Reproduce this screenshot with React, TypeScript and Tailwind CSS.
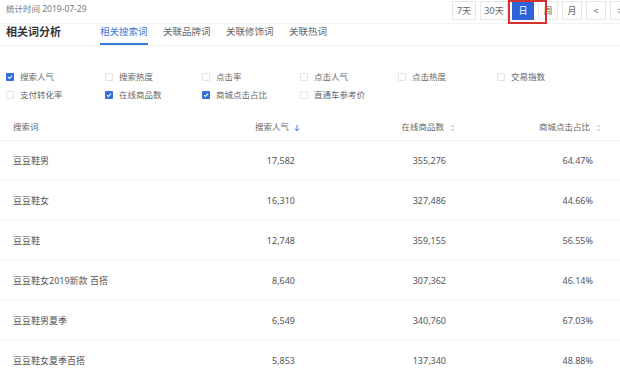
import React from "react";

const font = { fontFamily: '"Noto Sans", "Noto Sans CJK SC", sans-serif' };

function Check({ on }: { on: boolean }) {
  return on ? (
    <span className="flex h-[8px] w-[8px] items-center justify-center rounded-[1px] bg-[#2f6fe0]">
      <svg width="6" height="6" viewBox="0 0 6 6">
        <path d="M1 3.1 L2.4 4.5 L5 1.6" fill="none" stroke="#fff" strokeWidth="1.1" />
      </svg>
    </span>
  ) : (
    <span className="h-[8px] w-[8px] rounded-[1px] border border-[#e3e3e3] bg-white" />
  );
}

function SortBoth() {
  return (
    <svg width="5" height="8" viewBox="0 0 5 8" className="ml-[6px]">
      <path d="M2.5 0.5 L4.5 3 L0.5 3 Z" fill="#d6d6d6" />
      <path d="M2.5 7.5 L4.5 5 L0.5 5 Z" fill="#d6d6d6" />
    </svg>
  );
}

function SortDown() {
  return (
    <svg width="6" height="8" viewBox="0 0 6 8" className="ml-[5px]">
      <path d="M3 1 L3 6" stroke="#3b78e7" strokeWidth="1" />
      <path d="M1 4.5 L3 7 L5 4.5" fill="none" stroke="#3b78e7" strokeWidth="1" />
    </svg>
  );
}

const checks: [string, boolean][] = [
  ["搜索人气", true],
  ["搜索热度", false],
  ["点击率", false],
  ["点击人气", false],
  ["点击热度", false],
  ["交易指数", false],
  ["支付转化率", false],
  ["在线商品数", true],
  ["商城点击占比", true],
  ["直通车参考价", false],
];

const rows = [
  ["豆豆鞋男", "17,582", "355,276", "64.47%"],
  ["豆豆鞋女", "16,310", "327,486", "44.66%"],
  ["豆豆鞋", "12,748", "359,155", "56.55%"],
  ["豆豆鞋女2019新款 百搭", "8,640", "307,362", "46.14%"],
  ["豆豆鞋男夏季", "6,549", "340,760", "67.03%"],
  ["豆豆鞋女夏季百搭", "5,853", "137,340", "48.88%"],
];

const grid = "grid grid-cols-[200px_105px_155px_160px]";

export default function App() {
  return (
    <div className="relative h-[378px] w-[620px] overflow-hidden bg-white text-[#555]" style={font}>
      {/* top bar */}
      <div className="flex h-[24px] items-start justify-between border-b border-[#f2f2f2] pl-[6px]">
        <div className="mt-[3px] text-[8.5px] leading-[12px] text-[#777]">统计时间 2019-07-29</div>
        <div className="mr-[-10px] mt-[1px] flex gap-[4px] text-[9px] text-[#666]">
          <div className="flex h-[19px] w-[24px] items-center justify-center border border-[#e6e6e6]">7天</div>
          <div className="flex h-[19px] w-[28px] items-center justify-center border border-[#e6e6e6]">30天</div>
          <div className="flex h-[19px] w-[22px] items-center justify-center bg-[#2d63d6] text-white">日</div>
          <div className="flex h-[19px] w-[20px] items-center justify-center border border-[#e6e6e6]">周</div>
          <div className="flex h-[19px] w-[20px] items-center justify-center border border-[#e6e6e6]">月</div>
          <div className="flex h-[19px] w-[20px] items-center justify-center border border-[#e6e6e6]">&lt;</div>
          <div className="flex h-[19px] w-[20px] items-center justify-center border border-[#e6e6e6]">&gt;</div>
        </div>
      </div>
      <div className="pointer-events-none absolute left-[508px] top-0 h-[24px] w-[39px] border-2 border-[#d5322f]" />

      {/* tabs */}
      <div className="flex h-[22px] items-end border-b border-[#efefef] pl-[6px]">
        <div className="mb-[6px] w-[94px] text-[11px] font-bold leading-[14px] text-[#333]">相关词分析</div>
        <div className="flex gap-[15px] text-[9.5px] leading-[12px]">
          <div className="w-[48px] border-b-2 border-[#3a78d8] pb-[5px] text-[#3a78d8]">相关搜索词</div>
          <div className="w-[48px] pb-[7px] text-[#666]">关联品牌词</div>
          <div className="w-[48px] pb-[7px] text-[#666]">关联修饰词</div>
          <div className="w-[48px] pb-[7px] text-[#666]">关联热词</div>
        </div>
      </div>

      {/* checkboxes */}
      <div className="mt-[22px] grid grid-cols-[99px_97px_98px_98px_99px_auto] pl-[6px] text-[8.5px] text-[#666]">
        {checks.map(([label, on]) => (
          <div key={label} className="flex h-[18px] items-center gap-[6px]">
            <Check on={on} />
            <span>{label}</span>
          </div>
        ))}
      </div>

      {/* table header */}
      <div className={`${grid} mt-[11px] h-[26px] items-center border-b border-[#eeeeee] text-[8.5px] text-[#666]`}>
        <div className="pl-[13px]">搜索词</div>
        <div className="flex items-center justify-end pr-[5px]">
          搜索人气
          <SortDown />
        </div>
        <div className="flex items-center justify-end pr-[5px]">
          在线商品数
          <SortBoth />
        </div>
        <div className="flex items-center justify-end pr-[19px]">
          商城点击占比
          <SortBoth />
        </div>
      </div>

      {rows.map((r) => (
        <div key={r[0]} className={`${grid} h-[40px] items-center border-b border-[#f5f5f5] text-[9px]`}>
          <div className="pl-[13px]">{r[0]}</div>
          <div className="pr-[10px] text-right">{r[1]}</div>
          <div className="pr-[14px] text-right">{r[2]}</div>
          <div className="pr-[27px] text-right">{r[3]}</div>
        </div>
      ))}
    </div>
  );
}
